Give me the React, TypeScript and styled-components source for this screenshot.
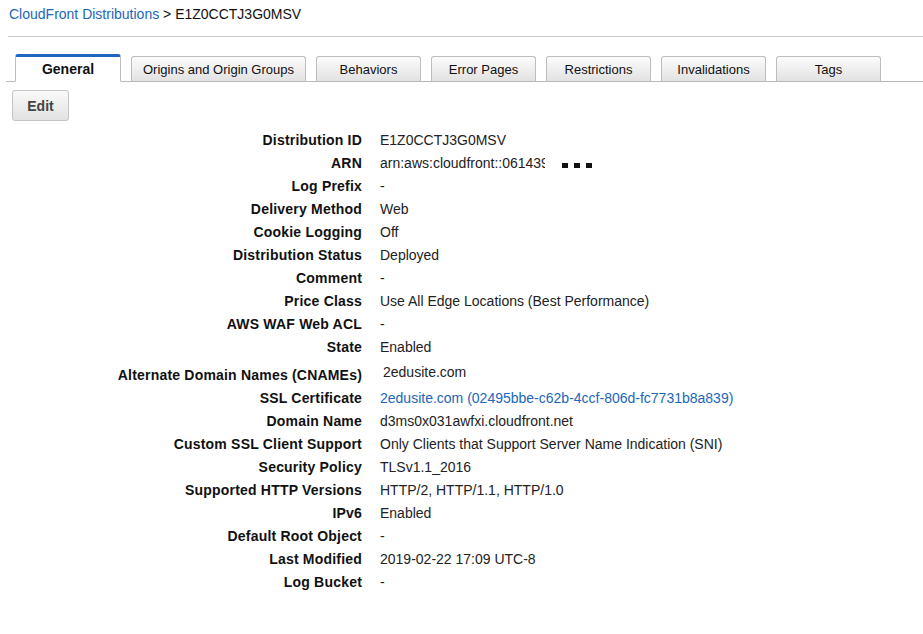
import React from "react";
import styled, { createGlobalStyle } from "styled-components";

const Global = createGlobalStyle`
  html, body { margin: 0; padding: 0; background: #fff; }
  body { font-family: "Liberation Sans", Arial, sans-serif; font-size: 14px; color: #222; }
`;

const Page = styled.div`
  width: 923px;
`;

const Breadcrumb = styled.div`
  padding: 6px 9px 0;
  line-height: 16px;
  color: #111;
`;

const Link = styled.a`
  color: #2266bb;
  text-decoration: none;
`;

const Rule = styled.div`
  margin: 14px 0 0 8px;
  height: 1px;
  background: #c8c8c8;
`;

const TabBar = styled.div`
  margin: 17px 0 0 6px;
  padding-left: 9px;
  display: flex;
  align-items: flex-end;
  gap: 10px;
  height: 27px;
  border-bottom: 1px solid #b9b9b9;
`;

const Tab = styled.div<{ $active?: boolean; $w?: number }>`
  box-sizing: border-box;
  width: ${(p) => p.$w ?? 105}px;
  height: ${(p) => (p.$active ? 28 : 26)}px;
  margin-bottom: -1px;
  border: 1px solid #bdbdbd;
  border-bottom: ${(p) => (p.$active ? "1px solid #fff" : "1px solid #b9b9b9")};
  border-top: ${(p) => (p.$active ? "3px solid #1f66c1" : "1px solid #bdbdbd")};
  border-radius: 3px 3px 0 0;
  background: ${(p) => (p.$active ? "#fff" : "linear-gradient(#fcfcfc, #e2e2e2)")};
  display: flex;
  align-items: center;
  justify-content: center;
  font-size: ${(p) => (p.$active ? 14 : 13)}px;
  font-weight: ${(p) => (p.$active ? "bold" : "normal")};
  color: #111;
  padding-top: ${(p) => (p.$active ? 0 : 1)}px;
`;

const Toolbar = styled.div`
  padding: 8px 0 0 12px;
`;

const Button = styled.button`
  box-sizing: border-box;
  width: 57px;
  height: 31px;
  border: 1px solid #c4c4c4;
  border-radius: 3px;
  background: linear-gradient(#f9f9f9, #e2e2e2);
  font-family: "Liberation Sans", Arial, sans-serif;
  font-size: 14px;
  font-weight: bold;
  color: #444;
  padding: 0;
`;

const Details = styled.div`
  margin-top: 8px;
  display: grid;
  grid-template-columns: 362px 1fr;
  column-gap: 18px;
`;

const Label = styled.div<{ $tall?: boolean }>`
  text-align: right;
  font-weight: bold;
  color: #111;
  line-height: 23px;
  letter-spacing: 0.2px;
  margin-top: ${(p) => (p.$tall ? 5 : 0)}px;
`;

const Value = styled.div<{ $shift?: boolean }>`
  color: #222;
  line-height: 23px;
  margin-top: ${(p) => (p.$shift ? 2 : 0)}px;
  padding-left: ${(p) => (p.$shift ? 3 : 0)}px;
  white-space: nowrap;
`;

const Clip = styled.span`
  display: inline-block;
  width: 165px;
  overflow: hidden;
  vertical-align: top;
`;

const Dots = styled.span`
  display: inline-flex;
  gap: 6px;
  margin-left: 17px;
  vertical-align: top;
  padding-top: 11px;
`;

const Dot = styled.span`
  width: 6px;
  height: 5px;
  background: #111;
`;

const tabs = [
  { label: "General", active: true, w: 106 },
  { label: "Origins and Origin Groups", w: 175 },
  { label: "Behaviors" },
  { label: "Error Pages" },
  { label: "Restrictions" },
  { label: "Invalidations" },
  { label: "Tags" },
];

type Row = { label: string; value: React.ReactNode; tall?: boolean; shift?: boolean };

const rows: Row[] = [
  { label: "Distribution ID", value: "E1Z0CCTJ3G0MSV" },
  {
    label: "ARN",
    value: (
      <>
        <Clip>arn:aws:cloudfront::061439</Clip>
        <Dots>
          <Dot />
          <Dot />
          <Dot />
        </Dots>
      </>
    ),
  },
  { label: "Log Prefix", value: "-" },
  { label: "Delivery Method", value: "Web" },
  { label: "Cookie Logging", value: "Off" },
  { label: "Distribution Status", value: "Deployed" },
  { label: "Comment", value: "-" },
  { label: "Price Class", value: "Use All Edge Locations (Best Performance)" },
  { label: "AWS WAF Web ACL", value: "-" },
  { label: "State", value: "Enabled" },
  { label: "Alternate Domain Names (CNAMEs)", value: "2edusite.com", tall: true, shift: true },
  {
    label: "SSL Certificate",
    value: <Link href="#">2edusite.com (02495bbe-c62b-4ccf-806d-fc7731b8a839)</Link>,
  },
  { label: "Domain Name", value: "d3ms0x031awfxi.cloudfront.net" },
  { label: "Custom SSL Client Support", value: "Only Clients that Support Server Name Indication (SNI)" },
  { label: "Security Policy", value: "TLSv1.1_2016" },
  { label: "Supported HTTP Versions", value: "HTTP/2, HTTP/1.1, HTTP/1.0" },
  { label: "IPv6", value: "Enabled" },
  { label: "Default Root Object", value: "-" },
  { label: "Last Modified", value: "2019-02-22 17:09 UTC-8" },
  { label: "Log Bucket", value: "-" },
];

export default function App() {
  return (
    <Page>
      <Global />
      <Breadcrumb>
        <Link href="#">CloudFront Distributions</Link> &gt; E1Z0CCTJ3G0MSV
      </Breadcrumb>
      <Rule />
      <TabBar>
        {tabs.map((t) => (
          <Tab key={t.label} $active={t.active} $w={t.w}>
            {t.label}
          </Tab>
        ))}
      </TabBar>
      <Toolbar>
        <Button>Edit</Button>
      </Toolbar>
      <Details>
        {rows.map((r) => (
          <React.Fragment key={r.label}>
            <Label $tall={r.tall}>{r.label}</Label>
            <Value $shift={r.shift}>{r.value}</Value>
          </React.Fragment>
        ))}
      </Details>
    </Page>
  );
}
